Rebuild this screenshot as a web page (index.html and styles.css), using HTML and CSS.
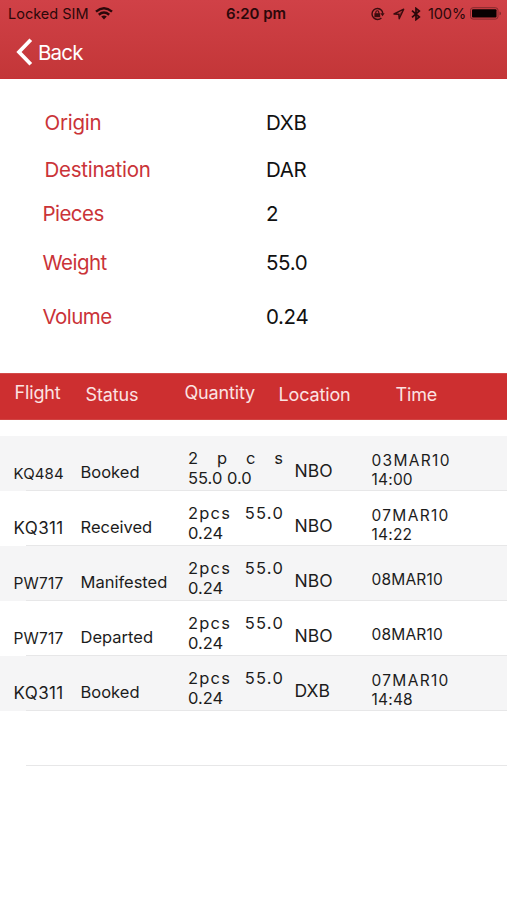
FILE: index.html
```html
<!DOCTYPE html>
<html lang="en">
<head>
<meta charset="utf-8">
<title>Shipment tracking</title>
<link rel="stylesheet" href="styles.css">
</head>
<body>
<header class="top">
  <div class="status">
    <div class="carrier"><span>Locked SIM</span>
      <svg width="18" height="13" viewBox="0 0 18 13" fill="none" stroke="#2b080a" stroke-width="2.5"><path d="M1 4.6Q9-2 17 4.6M3.8 7.7Q9 3.4 14.2 7.7"/><path d="M6.2 9.6Q9 7.3 11.8 9.6L9 12.6Z" fill="#2b080a" stroke="none"/></svg>
    </div>
    <div class="clock">6:20 pm</div>
    <div class="indicators">
      <svg width="15" height="14" viewBox="0 0 15 14" fill="none" stroke="#3a0c0f" stroke-width="1.4"><path d="M11.5 3.2A5.5 5.5 0 1 0 11.4 10.9M11.5 3.2Q12.7 4.6 12.7 6.6"/><path d="M10.4 6.2H14.6L12.5 9.2Z" fill="#3a0c0f" stroke="none"/><path d="M4.4 6.2H10.2V10.2H4.4Z" fill="#3a0c0f" stroke="none"/><path d="M5.8 6.5V5.2Q5.8 3.8 7.3 3.8T8.8 5.2V6.5" stroke-width="1.1"/></svg>
      <svg class="arrow" width="12" height="12" viewBox="0 0 12 12" fill="none" stroke="#3a0c0f" stroke-width="1.4" stroke-linejoin="round"><path d="M1 6 10.7 1.2 6.2 10.8 5.8 6.2Z"/><path d="M5.8 6.2 10.7 1.2 6.2 10.8Z" fill="#3a0c0f" stroke="none" opacity=".5"/></svg>
      <svg class="bt" width="10" height="14" viewBox="0 0 10 14" fill="none" stroke="#2b080a" stroke-width="1.7"><path d="M1 3.7 8.3 10 5 12.6V1.4L8.3 4 1 10.3"/></svg>
      <span class="percent">100%</span>
      <svg width="32" height="13" viewBox="0 0 32 13"><rect x=".5" y=".7" width="27.5" height="11.4" rx="2.6" fill="none" stroke="#842a2e"/><rect x="2" y="2.2" width="24.5" height="8.4" rx="1" fill="#080102"/><path d="M29.5 4.5Q31 5 31 6.4T29.5 8.3Z" fill="#842a2e"/></svg>
    </div>
  </div>
  <div class="back">
    <svg width="17" height="28" viewBox="0 0 17 28" fill="none" stroke="#fff" stroke-width="3.8"><path d="M14.8 1.8 3 14 14.8 26.2"/></svg>
    <span>Back</span>
  </div>
</header>
<main>
  <section class="details">
    <div class="detail origin"><span class="label">Origin</span><span>DXB</span></div>
    <div class="detail destination"><span class="label">Destination</span><span>DAR</span></div>
    <div class="detail pieces"><span class="label">Pieces</span><span>2</span></div>
    <div class="detail weight"><span class="label">Weight</span><span>55.0</span></div>
    <div class="detail volume"><span class="label">Volume</span><span>0.24</span></div>
  </section>
  <div class="heading">
    <span class="h-flight">Flight</span><span class="h-status">Status</span><span class="h-quantity">Quantity</span><span class="h-location">Location</span><span class="h-time">Time</span>
  </div>
  <section class="events">
    <div class="event shaded">
      <span class="flight small digits">KQ484</span><span class="state">Booked</span>
      <div class="quantity"><div class="spread"><span>2</span><span>p</span><span>c</span><span>s</span></div><div>55.0 0.0</div></div>
      <span class="location">NBO</span><div class="time"><div class="wide">03MAR10</div><div>14:00</div></div>
    </div>
    <div class="event">
      <span class="flight">KQ311</span><span class="state">Received</span>
      <div class="quantity"><div class="spread wide"><span>2pcs</span><span>55.0</span></div><div>0.24</div></div>
      <span class="location">NBO</span><div class="time"><div class="wide">07MAR10</div><div>14:22</div></div>
    </div>
    <div class="event shaded">
      <span class="flight small">PW717</span><span class="state">Manifested</span>
      <div class="quantity"><div class="spread wide"><span>2pcs</span><span>55.0</span></div><div>0.24</div></div>
      <span class="location">NBO</span><div class="time single"><div>08MAR10</div></div>
    </div>
    <div class="event">
      <span class="flight small">PW717</span><span class="state">Departed</span>
      <div class="quantity"><div class="spread wide"><span>2pcs</span><span>55.0</span></div><div>0.24</div></div>
      <span class="location">NBO</span><div class="time single"><div>08MAR10</div></div>
    </div>
    <div class="event shaded">
      <span class="flight">KQ311</span><span class="state">Booked</span>
      <div class="quantity"><div class="spread wide"><span>2pcs</span><span>55.0</span></div><div>0.24</div></div>
      <span class="location">DXB</span><div class="time"><div class="wide">07MAR10</div><div>14:48</div></div>
    </div>
    <div class="event"></div>
  </section>
</main>
</body>
</html>
```
FILE: styles.css
```css
* { box-sizing: border-box; }
body { margin: 0; height: 900px; overflow: hidden; background: #fff; color: #1c1c1c; font-family: Inter, "Liberation Sans", sans-serif; white-space: nowrap; }
svg { display: block; flex: none; }
.top { height: 79px; background: linear-gradient(#d04147, #c33638); border-bottom: 1px solid #c83034; }
.status { display: grid; grid-template-columns: 226px 144px 1fr; height: 27px; align-items: center; color: #2b080a; font-size: 14.5px; }
.carrier { display: flex; align-items: center; gap: 6px; padding-left: 8px; }
.clock { font-weight: 600; font-size: 15px; letter-spacing: -.05px; }
.indicators { display: flex; align-items: center; }
.arrow { margin-left: 8px; }
.bt { margin-left: 6px; }
.percent { width: 38px; margin: 0 4px 0 7px; letter-spacing: -.1px; }
.back { display: flex; align-items: center; height: 50px; padding-left: 16px; gap: 5px; color: #fff; font-size: 20.5px; letter-spacing: -.8px; }
.details { height: 294px; padding-top: 32px; font-size: 20.5px; letter-spacing: -.35px; line-height: 24px; color: #111; }
.detail { display: grid; grid-template-columns: 223.5px 1fr; height: 24px; padding-left: 42.5px; }
.label { color: #ca3338; }
.origin .label, .destination .label { padding-left: 2px; letter-spacing: -.25px; }
.destination { margin-top: 23px; }
.pieces { margin-top: 20px; }
.pieces .label, .weight .label, .volume .label { letter-spacing: -.55px; }
.weight { margin-top: 25px; }
.volume { margin-top: 30px; }
.heading { display: grid; grid-template-columns: 71px 99px 94px 117px 1fr; height: 47px; padding-left: 14.5px; background: #cd2f30; border-top: 1px solid #d34b4a; border-bottom: 1px solid #d14443; color: #fbe3e2; font-size: 18px; letter-spacing: -.15px; line-height: 22px; }
.h-flight { padding-top: 8px; }
.h-status, .h-location, .h-time { padding-top: 10px; }
.h-quantity { padding-top: 8px; }
.events { margin-top: 16px; }
.event { display: grid; grid-template-columns: 67px 107.5px 106.5px 77px 1fr; height: 55px; padding-left: 13.5px; font-size: 16.5px; line-height: 20px; background: linear-gradient(#e7e7e8, #e7e7e8) 26px 100% / 100% 1px no-repeat; }
.shaded { background-color: #f5f5f6; }
.flight { padding-top: 27px; font-size: 17px; letter-spacing: .4px; }
.flight.small { font-size: 15.5px; padding-top: 28px; letter-spacing: .2px; }
.flight.digits { font-size: 15px; letter-spacing: .1px; }
.state { padding-top: 26px; letter-spacing: 0; }
.quantity { width: 95px; padding-top: 12px; }
.quantity > div { height: 20px; }
.spread { display: flex; justify-content: space-between; }
.quantity .wide { width: 96px; letter-spacing: 1.2px; }
.location { padding-top: 24.5px; font-size: 17.5px; }
.time { padding-top: 15px; font-size: 15.5px; line-height: 19px; letter-spacing: .2px; }
.time .wide { letter-spacing: 1.3px; }
.time.single { padding-top: 24px; letter-spacing: .2px; }
```
